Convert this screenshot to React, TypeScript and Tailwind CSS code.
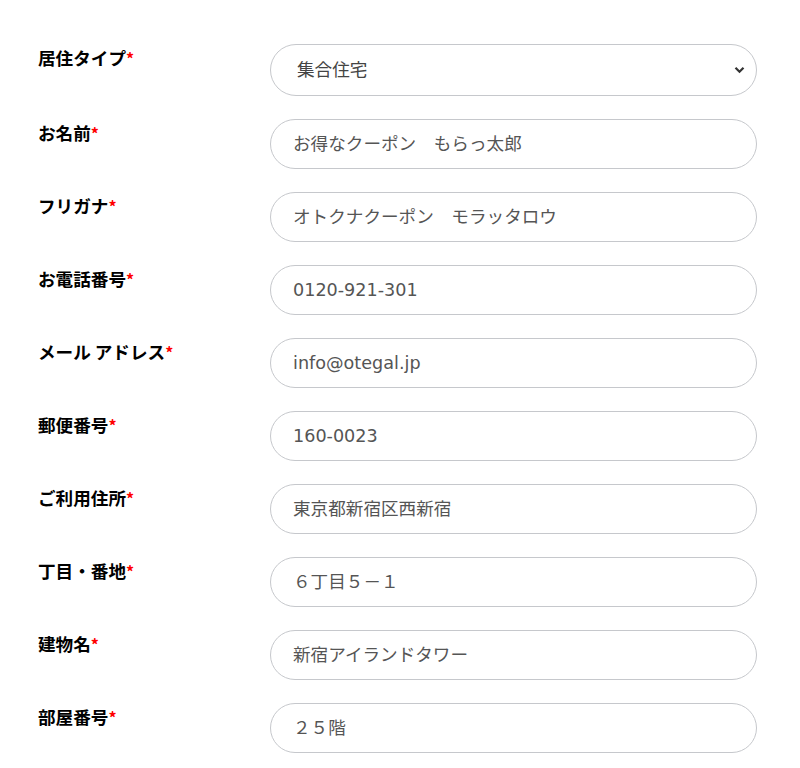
import React from "react";

const rows: { label: string; value: string }[] = [
  { label: "お名前", value: "お得なクーポン　もらっ太郎" },
  { label: "フリガナ", value: "オトクナクーポン　モラッタロウ" },
  { label: "お電話番号", value: "0120-921-301" },
  { label: "メール アドレス", value: "info@otegal.jp" },
  { label: "郵便番号", value: "160-0023" },
  { label: "ご利用住所", value: "東京都新宿区西新宿" },
  { label: "丁目・番地", value: "６丁目５－１" },
  { label: "建物名", value: "新宿アイランドタワー" },
  { label: "部屋番号", value: "２５階" },
];

function Label({ text }: { text: string }) {
  return (
    <div className="w-[232px] shrink-0 pt-[1px] text-[17.6px] leading-[25px] font-bold text-black [font-family:'Noto_Sans_CJK_JP',sans-serif]">
      {text}
      <span className="text-[#ff0000] text-[16px] font-bold">*</span>
    </div>
  );
}

export default function App() {
  return (
    <div className="w-[800px] min-h-[768px] bg-white pt-[44px] pl-[38px] pr-[43px]">
      <div className="flex flex-col gap-[23px]">
        <div className="flex items-start">
          <Label text="居住タイプ" />
          <div className="relative flex-1 h-[52px] rounded-full border border-[#c6c8cc] bg-white flex items-center pl-[26px] pr-[40px]">
            <span className="text-[17.6px] text-[#444] [font-family:'DejaVu_Sans','Noto_Sans_CJK_JP',sans-serif]">
              集合住宅
            </span>
            <svg
              className="absolute right-[11px] top-1/2 -translate-y-1/2"
              width="11"
              height="8"
              viewBox="0 0 11 8"
            >
              <path d="M1.5 1.8 L5.5 5.8 L9.5 1.8" fill="none" stroke="#333" strokeWidth="2.2" />
            </svg>
          </div>
        </div>
        {rows.map((r) => (
          <div key={r.label} className="flex items-start">
            <Label text={r.label} />
            <div className="flex-1 h-[50px] rounded-full border border-[#c6c8cc] bg-white flex items-center pl-[22px]">
              <span className="text-[17.6px] text-[#555] [font-family:'DejaVu_Sans','Noto_Sans_CJK_JP',sans-serif] whitespace-pre">
                {r.value}
              </span>
            </div>
          </div>
        ))}
      </div>
    </div>
  );
}
